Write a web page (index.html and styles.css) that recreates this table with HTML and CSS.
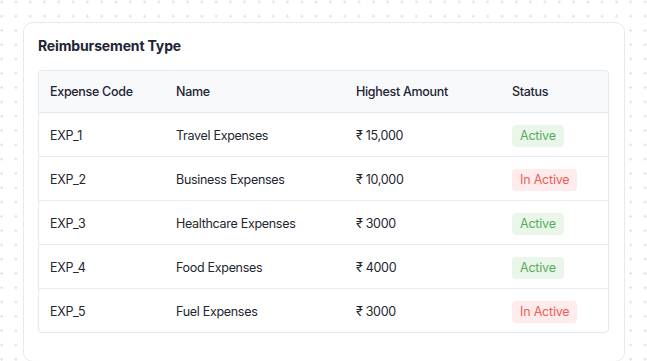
FILE: index.html
```html
<!DOCTYPE html>
<html>
<head>
<meta charset="utf-8">
<link rel="stylesheet" href="styles.css">
</head>
<body>
<div class="card">
  <h2 class="title">Reimbursement Type</h2>
  <div class="table-wrap">
    <table class="tbl">
      <colgroup>
        <col class="c1"><col class="c2"><col class="c3"><col class="c4">
      </colgroup>
      <thead>
        <tr><th>Expense Code</th><th>Name</th><th>Highest Amount</th><th>Status</th></tr>
      </thead>
      <tbody>
        <tr><td>EXP_1</td><td>Travel Expenses</td><td>₹ 15,000</td><td><span class="badge active">Active</span></td></tr>
        <tr><td>EXP_2</td><td>Business Expenses</td><td>₹ 10,000</td><td><span class="badge inactive">In Active</span></td></tr>
        <tr><td>EXP_3</td><td>Healthcare Expenses</td><td>₹ 3000</td><td><span class="badge active">Active</span></td></tr>
        <tr><td>EXP_4</td><td>Food Expenses</td><td>₹ 4000</td><td><span class="badge active">Active</span></td></tr>
        <tr><td>EXP_5</td><td>Fuel Expenses</td><td>₹ 3000</td><td><span class="badge inactive">In Active</span></td></tr>
      </tbody>
    </table>
  </div>
</div>
</body>
</html>
```
FILE: styles.css
```css
html, body {
  margin: 0;
  padding: 0;
}
body {
  width: 647px;
  height: 361px;
  overflow: hidden;
  background-color: #ffffff;
  background-image: radial-gradient(circle, #dfe0e6 1px, transparent 1.4px);
  background-size: 14.3px 14.3px;
  background-position: -5.5px -5.3px;
  font-family: Inter, "Noto Sans", sans-serif;
  color: #1f2330;
  padding-top: 22px;
  padding-left: 23px;
  box-sizing: border-box;
}
.card {
  width: 602px;
  height: 340px;
  box-sizing: border-box;
  background: #ffffff;
  border: 1px solid #e7e8f2;
  border-radius: 10px;
  padding: 13px 15px 0 14px;
}
.title {
  margin: 0 0 14px 0;
  font-size: 14px;
  line-height: 20px;
  font-weight: 700;
  color: #1e2433;
  letter-spacing: -0.15px;
}
.table-wrap {
  width: 571px;
  border: 1px solid #e6e8ee;
  border-radius: 4px;
  overflow: hidden;
  box-sizing: border-box;
}
.tbl {
  width: 100%;
  border-collapse: collapse;
  table-layout: fixed;
  font-size: 12.5px;
  letter-spacing: -0.3px;
}
.c1 { width: 126px; }
.c2 { width: 180px; }
.c3 { width: 156px; }
.c4 { width: auto; }
.tbl th {
  text-align: left;
  font-weight: 500;
  background: #f8f9fb;
  height: 41px;
  padding: 0 0 0 11px;
  border-bottom: 1px solid #e6e8ee;
  color: #1e2433;
}
.tbl td {
  height: 41px;
  padding: 2px 0 0 11px;
  border-bottom: 1px solid #e9ebf0;
  color: #22262f;
}
.tbl tbody tr:last-child td {
  border-bottom: none;
}
.badge {
  display: inline-block;
  height: 22px;
  line-height: 22px;
  padding: 0 8px;
  border-radius: 4px;
  font-size: 12.5px;
  letter-spacing: -0.2px;
}
.active {
  background: #ebf6ea;
  color: #55ad5a;
}
.inactive {
  background: #fdeceb;
  color: #ec5d58;
}
```
